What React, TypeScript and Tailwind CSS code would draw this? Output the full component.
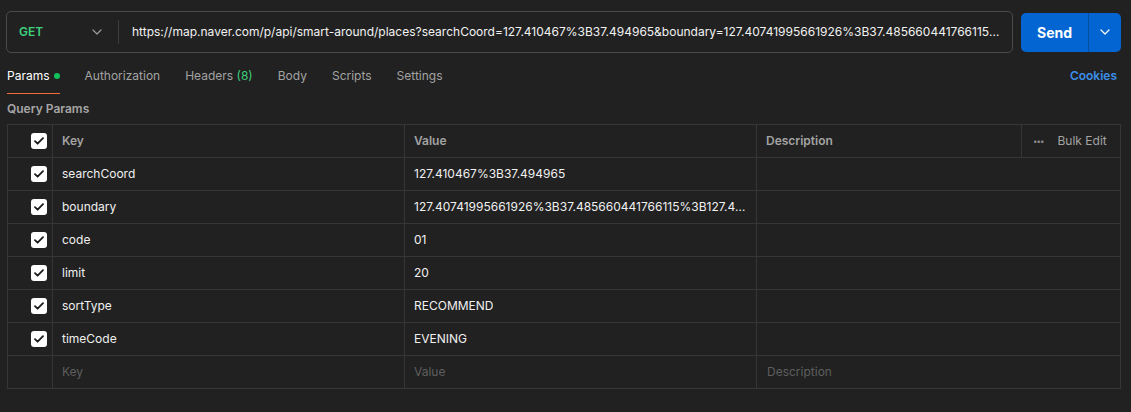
import React from 'react'

const url =
  'https://map.naver.com/p/api/smart-around/places?searchCoord=127.410467%3B37.494965&boundary=127.40741995661926%3B37.485660441766115%3B127.41426788352345%3B37.50426881399464&code=01&limit=20&sortType=RECOMMEND&timeCode=EVENING'

const params = [
  { key: 'searchCoord', value: '127.410467%3B37.494965' },
  { key: 'boundary', value: '127.40741995661926%3B37.485660441766115%3B127.41426788352345%3B37.50426881399464' },
  { key: 'code', value: '01' },
  { key: 'limit', value: '20' },
  { key: 'sortType', value: 'RECOMMEND' },
  { key: 'timeCode', value: 'EVENING' },
]

const Chevron = ({ className = '' }: { className?: string }) => (
  <svg width="10" height="6" viewBox="0 0 10 6" className={className} fill="none">
    <path d="M1 1l4 4 4-4" stroke="currentColor" strokeWidth="1.2" strokeLinecap="round" strokeLinejoin="round" />
  </svg>
)

const Check = () => (
  <div className="w-4 h-4 rounded-[3px] bg-white flex items-center justify-center">
    <svg width="10" height="8" viewBox="0 0 10 8" fill="none">
      <path d="M1 4.2l2.6 2.5L9 1.2" stroke="#1a1a1a" strokeWidth="1.8" strokeLinecap="round" strokeLinejoin="round" />
    </svg>
  </div>
)

const cols = 'grid grid-cols-[45px_352px_352px_265px_1fr]'
const cell = 'border-r border-[#363636] flex items-center min-w-0'

export default function App() {
  return (
    <div
      className="w-[1131px] h-[412px] bg-[#212121] text-[12px] text-[#e6e6e6] overflow-hidden"
      style={{ fontFamily: 'Inter, "Noto Sans", sans-serif' }}
    >
      {/* request bar */}
      <div className="flex items-center pl-[6px] pr-[10px] pt-[11px] gap-2">
        <div className="flex-1 h-[42px] flex items-center border border-[#4b4b4b] rounded-[5px] min-w-0">
          <div className="w-[111px] flex items-center justify-between pl-[12px] pr-[16px] shrink-0">
            <span className="text-[#3ecf7c] font-semibold text-[12px]">GET</span>
            <Chevron className="text-[#9a9a9a]" />
          </div>
          <div className="w-px h-[24px] bg-[#3d3d3d] shrink-0" />
          <div className="flex-1 min-w-0 pl-[13px] pr-[8px] truncate text-[#f2f2f2]">{url}</div>
        </div>
        <div className="w-[100px] h-[39px] flex rounded-[5px] bg-[#0265d2] text-white shrink-0">
          <div className="w-[67px] flex items-center justify-center font-bold text-[14px]">Send</div>
          <div className="w-px bg-[#0b4f9c]" />
          <div className="flex-1 flex items-center justify-center">
            <Chevron />
          </div>
        </div>
      </div>

      {/* tabs */}
      <div className="flex items-end justify-between pl-[7px] pr-[14px] mt-[14px]">
        <div className="flex items-end gap-[25px]">
          <div className="flex flex-col">
            <div className="flex items-center gap-[4px] text-white">
              Params <span className="w-[6px] h-[6px] rounded-full bg-[#12c25c]" />
            </div>
            <div className="h-[1px] bg-[#f26b3a] mt-[8px]" />
          </div>
          <div className="text-[#a3a3a3] pb-[9px]">Authorization</div>
          <div className="text-[#a3a3a3] pb-[9px]">
            Headers <span className="text-[#3ecf7c]">(8)</span>
          </div>
          <div className="text-[#a3a3a3] pb-[9px]">Body</div>
          <div className="text-[#a3a3a3] pb-[9px]">Scripts</div>
          <div className="text-[#a3a3a3] pb-[9px]">Settings</div>
        </div>
        <div className="text-[#3d8fea] font-semibold pb-[9px]">Cookies</div>
      </div>

      <div className="pl-[7px] mt-[6px] text-[12px] font-semibold text-[#a6a6a6]">Query Params</div>

      {/* table */}
      <div className="ml-[7px] w-[1114px] mt-[6px] border border-[#363636]">
        <div className={`${cols} h-[33px] border-b border-[#363636] font-semibold text-[#a3a3a3]`}>
          <div className={`${cell} justify-end pr-[5px]`}>
            <Check />
          </div>
          <div className={`${cell} pl-[9px]`}>Key</div>
          <div className={`${cell} pl-[9px]`}>Value</div>
          <div className={`${cell} pl-[9px]`}>Description</div>
          <div className="flex items-center pl-[11px] gap-[14px] font-normal text-[#a3a3a3] text-[12px]">
            <span className="text-[8px] tracking-[-1px] text-[#8a8a8a]">•••</span>
            Bulk Edit
          </div>
        </div>
        {params.map((p) => (
          <div key={p.key} className={`${cols} h-[33px] border-b border-[#363636]`}>
            <div className={`${cell} justify-end pr-[5px]`}>
              <Check />
            </div>
            <div className={`${cell} pl-[9px] text-[#f0f0f0]`}>{p.key}</div>
            <div className={`${cell} pl-[9px] pr-[10px] text-[#f0f0f0]`}>
              <span className="truncate">{p.value}</span>
            </div>
            <div className="col-span-2" />
          </div>
        ))}
        <div className={`${cols} h-[32px] text-[#5e5e5e]`}>
          <div className={cell} />
          <div className={`${cell} pl-[9px]`}>Key</div>
          <div className={`${cell} pl-[9px]`}>Value</div>
          <div className="flex items-center pl-[10px] col-span-2">Description</div>
        </div>
      </div>
    </div>
  )
}
